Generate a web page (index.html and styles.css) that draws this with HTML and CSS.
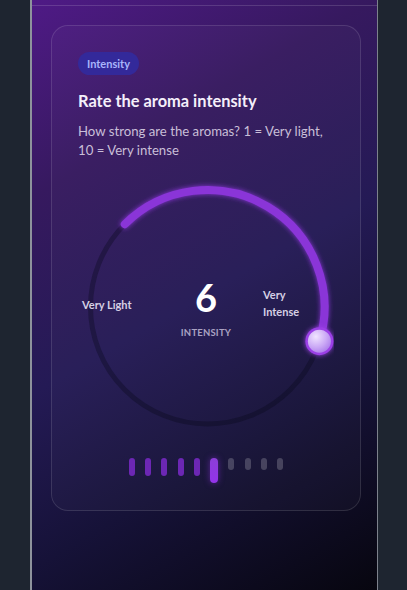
FILE: index.html
```html
<!DOCTYPE html>
<html>
<head>
<meta charset="utf-8">
<link rel="stylesheet" href="styles.css">
</head>
<body>
<div class="panel">
  <div class="topbar"></div>
  <div class="card">
    <span class="badge">Intensity</span>
    <h1 class="title">Rate the aroma intensity</h1>
    <p class="desc">How strong are the aromas? 1 = Very light, 10 = Very intense</p>
    <div class="dial">
      <svg class="dial-svg" width="256" height="250" viewBox="0 0 256 250">
        <defs>
          <radialGradient id="knobFill" cx="0.35" cy="0.3" r="0.8">
            <stop offset="0" stop-color="#f1e4ff"/>
            <stop offset="0.6" stop-color="#c9a6f5"/>
            <stop offset="1" stop-color="#a878ea"/>
          </radialGradient>
          <filter id="glow" x="-30%" y="-30%" width="160%" height="160%">
            <feGaussianBlur stdDeviation="2.5" result="b"/>
            <feMerge><feMergeNode in="b"/><feMergeNode in="SourceGraphic"/></feMerge>
          </filter>
        </defs>
        <circle cx="129.5" cy="126" r="117" fill="none" stroke="rgba(10,8,25,0.35)" stroke-width="5"/>
        <path d="M 46.77 43.27 A 117 117 0 0 1 241.39 160.21" fill="none" stroke="#8a35d8" stroke-width="8" stroke-linecap="round" filter="url(#glow)"/>
        <circle cx="241.39" cy="160.21" r="14" fill="#9b3fe6" filter="url(#glow)"/>
        <circle cx="241.39" cy="160.21" r="11.5" fill="url(#knobFill)"/>
      </svg>
      <span class="lbl lbl-left">Very Light</span>
      <span class="lbl lbl-right">Very<br>Intense</span>
      <div class="value">
        <span class="num">6</span>
        <span class="cap">INTENSITY</span>
      </div>
    </div>
    <div class="ticks">
      <span class="tick on"></span>
      <span class="tick on"></span>
      <span class="tick on"></span>
      <span class="tick on"></span>
      <span class="tick on"></span>
      <span class="tick active"></span>
      <span class="tick"></span>
      <span class="tick"></span>
      <span class="tick"></span>
      <span class="tick"></span>
    </div>
  </div>
</div>
</body>
</html>
```
FILE: styles.css
```css
* { box-sizing: border-box; }
html, body { margin: 0; padding: 0; }
body {
  background: #1e2530;
  font-family: "Lato", "Noto Sans", sans-serif;
  width: 407px;
  height: 590px;
  overflow: hidden;
}
.panel {
  margin-left: 30px;
  width: 348px;
  height: 590px;
  border-left: 2px solid #8e939c;
  border-right: 1px solid #7d828c;
  background: linear-gradient(150deg, #4f1a86 0%, #36195f 25%, #241a55 50%, #161238 72%, #07060f 100%);
  padding: 0 16px 0 19px;
}
.topbar {
  height: 6px;
  border-bottom: 1px solid rgba(255,255,255,0.14);
  margin: 0 -16px 0 -19px;
}
.card {
  margin-top: 19px;
  width: 310px;
  border: 1px solid rgba(255,255,255,0.12);
  border-radius: 17px;
  background: rgba(255,255,255,0.025);
  padding: 26px 26px 27px 26px;
  display: flex;
  flex-direction: column;
  align-items: flex-start;
}
.badge {
  display: inline-block;
  height: 23px;
  line-height: 23px;
  padding: 0 9px;
  border-radius: 12px;
  background: #33299a;
  color: #a9b5fb;
  font-size: 11px;
  font-weight: 700;
}
.title {
  margin: 15px 0 0;
  font-size: 16.4px;
  line-height: 22px;
  font-weight: 700;
  color: #f4effa;
}
.desc {
  margin: 10px 0 0;
  font-size: 13.2px;
  line-height: 19px;
  color: #c9bfd8;
}
.dial {
  position: relative;
  width: 256px;
  height: 250px;
  margin-top: 21px;
}
.dial-svg { display: block; }
.lbl {
  position: absolute;
  font-size: 11px;
  font-weight: 700;
  color: #d6d0e4;
  line-height: 17px;
}
.lbl-left { left: 4px; top: 115px; }
.lbl-right { left: 185px; top: 105px; }
.value {
  position: absolute;
  left: 0;
  right: 0;
  top: 94px;
  display: flex;
  flex-direction: column;
  align-items: center;
}
.num {
  font-size: 38px;
  font-weight: 700;
  line-height: 44px;
  color: #ffffff;
}
.cap {
  margin-top: 8px;
  font-size: 9.5px;
  font-weight: 700;
  color: #aaa3c2;
  letter-spacing: 0.2px;
}
.ticks {
  align-self: stretch;
  margin-top: 27px;
  display: flex;
  justify-content: center;
  align-items: flex-start;
  gap: 10.3px;
  height: 25px;
}
.tick {
  width: 6px;
  height: 12px;
  border-radius: 3px;
  background: rgba(255,255,255,0.2);
}
.tick.on {
  height: 18px;
  background: #6c27b4;
}
.tick.active {
  width: 8px;
  height: 25px;
  border-radius: 4px;
  background: linear-gradient(180deg, #8b3ed8, #9333ea);
  box-shadow: 0 0 6px rgba(147,51,234,0.5);
}
```
